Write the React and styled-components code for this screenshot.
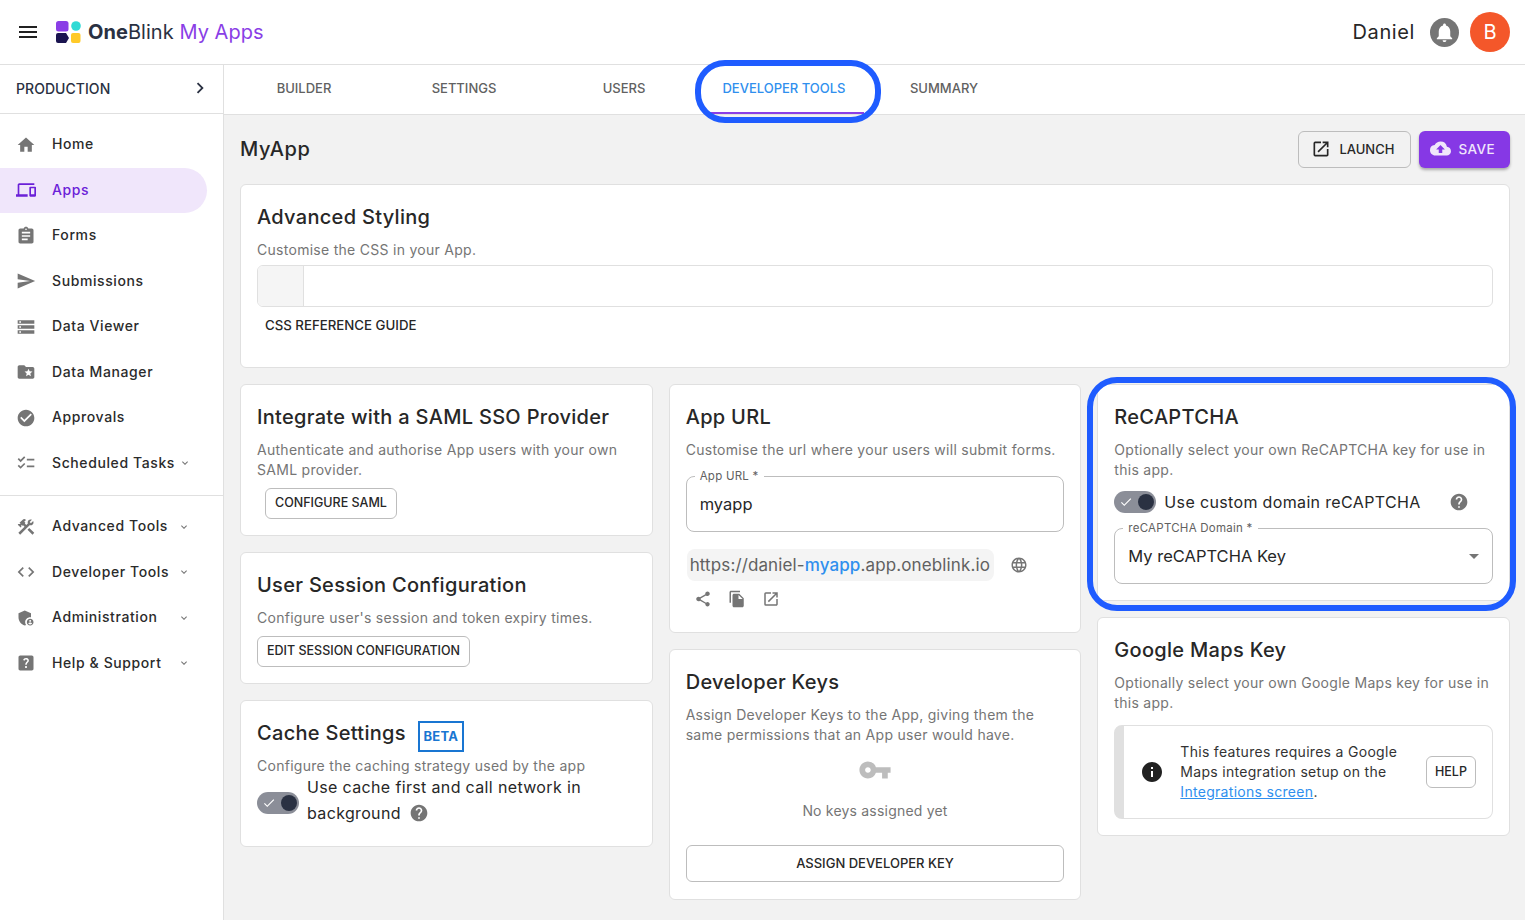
import React from "react";
import styled, { createGlobalStyle } from "styled-components";
import {
  MdMenu,
  MdChevronRight,
  MdNotifications,
  MdHome,
  MdDevices,
  MdAssignment,
  MdSend,
  MdStorage,
  MdFolderSpecial,
  MdCheckCircle,
  MdChecklist,
  MdConstruction,
  MdCode,
  MdAdminPanelSettings,
  MdHelpCenter,
  MdExpandMore,
  MdOpenInNew,
  MdCloudUpload,
  MdHelp,
  MdLanguage,
  MdShare,
  MdFileCopy,
  MdVpnKey,
  MdInfo,
  MdCheck,
  MdArrowDropDown,
} from "react-icons/md";

const GlobalStyle = createGlobalStyle`
  html, body {
    margin: 0;
    height: 100%;
    background: #fff;
    font-family: Inter, "Noto Sans", sans-serif;
    color: #272727;
  }
  * { box-sizing: border-box; }
`;

const Shell = styled.div`
  height: 100vh;
  display: flex;
  flex-direction: column;
  overflow: hidden;
`;

const AppBar = styled.header`
  height: 65px;
  flex: none;
  display: flex;
  align-items: center;
  padding: 0 15px 0 16px;
  background: #fff;
  border-bottom: 1px solid #e0e0e0;
`;

const MenuButton = styled.span`
  display: flex;
  color: #212121;
  font-size: 24px;
  margin-right: 16px;
`;

const Brand = styled.div`
  display: flex;
  align-items: center;
  gap: 7px;
  font-size: 20px;
  letter-spacing: 0.05px;
  color: #2a3142;
`;

const BrandStrong = styled.strong`
  font-weight: 700;
`;

const BrandAccent = styled.span`
  color: #8a3ee6;
`;

const Spacer = styled.div`
  flex: 1;
`;

const UserName = styled.span`
  font-size: 20px;
  letter-spacing: 0.6px;
  margin-right: 15px;
`;

const BellCircle = styled.span`
  width: 29px;
  height: 29px;
  border-radius: 50%;
  background: #757575;
  color: #fff;
  display: flex;
  align-items: center;
  justify-content: center;
  font-size: 23px;
  margin-right: 11px;
`;

const Avatar = styled.span`
  width: 40px;
  height: 40px;
  border-radius: 50%;
  background: #f4572a;
  color: #fff;
  display: flex;
  align-items: center;
  justify-content: center;
  font-size: 20px;
`;

const Body = styled.div`
  flex: 1;
  display: flex;
  min-height: 0;
`;

const Sidebar = styled.aside`
  width: 224px;
  flex: none;
  background: #fff;
  border-right: 1px solid #e0e0e0;
`;

const EnvRow = styled.div`
  height: 49px;
  display: flex;
  align-items: center;
  justify-content: space-between;
  padding: 0 12px 2px 16px;
  font-size: 14px;
  font-weight: 500;
  letter-spacing: 0.05px;
  color: #2a3142;
  border-bottom: 1px solid #e0e0e0;
  svg { font-size: 22px; }
`;

const NavGroup = styled.nav`
  padding: 8px 16px 9px 0;
  & + & { border-top: 1px solid #e0e0e0; }
`;

const NavItem = styled.div`
  height: 45.5px;
  display: flex;
  align-items: center;
  padding-left: 16px;
  font-size: 14px;
  font-weight: 500;
  letter-spacing: 0.6px;
  border-radius: 0 23px 23px 0;
  color: ${(p) => (p.$active ? "#6b21d8" : "#2b2b2b")};
  background: ${(p) => (p.$active ? "#f0e6fb" : "transparent")};
`;

const NavIcon = styled.span`
  width: 36px;
  display: flex;
  font-size: 20px;
  color: ${(p) => (p.$active ? "#6b21d8" : "#757575")};
`;

const NavLabel = styled.span`
  padding-bottom: 2px;
`;

const NavChevron = styled.span`
  display: flex;
  margin-left: 4px;
  font-size: 12px;
  color: #757575;
`;

const NavChevronEnd = styled(NavChevron)`
  margin-left: auto;
  margin-right: 17px;
`;

const Content = styled.div`
  flex: 1;
  min-width: 0;
  display: flex;
  flex-direction: column;
  background: #f2f2f2;
`;

const Tabs = styled.div`
  height: 50px;
  flex: none;
  display: flex;
  background: #fff;
  border-bottom: 1px solid #e0e0e0;
`;

const Tab = styled.div`
  position: relative;
  width: 160px;
  padding-bottom: 1px;
  display: flex;
  align-items: center;
  justify-content: center;
  font-size: 13px;
  font-weight: 500;
  color: ${(p) => (p.$active ? "#2f8fee" : "#616161")};
  border-bottom: 2px solid ${(p) => (p.$active ? "#8a3ee6" : "transparent")};
`;

const Highlight = styled.span`
  position: absolute;
  top: ${(p) => p.$top}px;
  right: ${(p) => p.$right}px;
  bottom: ${(p) => p.$bottom}px;
  left: ${(p) => p.$left}px;
  border: 6px solid #1f5cff;
  border-radius: ${(p) => p.$radius}px;
  pointer-events: none;
  z-index: 2;
`;

const Main = styled.main`
  flex: 1;
  padding: 16px 15px 16px 16px;
`;

const PageHead = styled.div`
  height: 37px;
  display: flex;
  align-items: center;
  gap: 8px;
  margin-bottom: 16px;
`;

const PageTitle = styled.h1`
  flex: 1;
  margin: 0;
  padding-bottom: 2px;
  font-size: 20px;
  font-weight: 500;
  letter-spacing: 0.6px;
`;

const OutlineButton = styled.button`
  display: inline-flex;
  align-items: center;
  justify-content: center;
  gap: 8px;
  height: ${(p) => p.$height || 31}px;
  width: ${(p) => p.$width || "auto"};
  padding: 0 9px 2px;
  background: transparent;
  border: 1px solid #bdbdbd;
  border-radius: 6px;
  font: 500 ${(p) => p.$size || 12.5}px Inter, sans-serif;
  color: #272727;
  svg { font-size: 20px; }
`;

const LaunchButton = styled(OutlineButton)`
  padding: 0 16px 2px 12px;
`;

const AssignButton = styled(OutlineButton)`
  margin: 18px 0 1px;
`;

const HelpButton = styled(OutlineButton)`
  padding: 0 8px 2px;
  width: 50px;
`;

const SaveButton = styled.button`
  display: inline-flex;
  align-items: center;
  gap: 7px;
  height: 37px;
  padding: 0 15px 2px 11px;
  background: #8638e5;
  color: #f0e6fb;
  border: none;
  border-radius: 6px;
  font: 500 13.5px Inter, sans-serif;
  letter-spacing: 0.4px;
  box-shadow: 0 2px 3px rgba(0, 0, 0, 0.3);
  svg { font-size: 21px; }
`;

const Card = styled.section`
  position: relative;
  background: #fff;
  border: 1px solid #e0e0e0;
  border-radius: 6px;
  padding: 16px;
`;

const WideCard = styled(Card)`
  height: 184px;
  margin-bottom: 16px;
`;

const Columns = styled.div`
  display: grid;
  grid-template-columns: repeat(3, 1fr);
  gap: 16px;
  align-items: start;
`;

const Column = styled.div`
  display: flex;
  flex-direction: column;
  gap: 16px;
`;

const CardTitle = styled.h2`
  margin: 0;
  font-size: 20px;
  line-height: 32px;
  font-weight: 500;
  letter-spacing: 0.3px;
  display: flex;
  align-items: center;
  gap: 8px;
`;

const CardText = styled.p`
  margin: 7px 0 0;
  font-size: 14px;
  line-height: 20px;
  letter-spacing: 0.28px;
  color: #757575;
`;

const EditorStub = styled.div`
  height: 42px;
  margin-top: 5px;
  display: flex;
  border: 1px solid #e0e0e0;
  border-radius: 6px;
  overflow: hidden;
`;

const EditorGutter = styled.div`
  width: 46px;
  background: #f5f5f5;
  border-right: 1px solid #e0e0e0;
`;

const TextAction = styled.div`
  margin: 10px 0 0 8px;
  font-size: 13.25px;
  line-height: 16px;
  font-weight: 500;
`;

const ActionRow = styled.div`
  margin-top: 8px;
  padding-left: ${(p) => p.$indent || 0}px;
`;

const BetaBadge = styled.span`
  width: 46px;
  height: 31px;
  margin: 3px 0 -3px 4px;
  border: 2px solid #1976d2;
  color: #1976d2;
  font-size: 13px;
  font-weight: 700;
  display: flex;
  align-items: center;
  justify-content: center;
`;

const SwitchRow = styled.div`
  display: flex;
  align-items: center;
  gap: 8px;
  margin-top: ${(p) => p.$top || 0}px;
  margin-bottom: ${(p) => p.$bottom || 0}px;
  font-size: 16px;
  line-height: 26px;
  letter-spacing: 0.35px;
  color: #272727;
`;

const HelpGlyph = styled(MdHelp)`
  font-size: 20px;
  color: #757575;
  vertical-align: -4px;
  margin-left: 3px;
  flex: none;
`;

const SwitchHelp = styled(HelpGlyph)`
  margin-left: 20px;
`;

const SwitchTrack = styled.span`
  position: relative;
  width: 42px;
  height: 22px;
  flex: none;
  margin-top: ${(p) => p.$drop || 0}px;
  border-radius: 11px;
  background: #8b8e98;
  color: #fff;
  display: flex;
  align-items: center;
  padding-left: 5px;
  font-size: 14px;
`;

const SwitchKnob = styled.span`
  position: absolute;
  right: 2px;
  top: 3px;
  width: 16px;
  height: 16px;
  border-radius: 50%;
  background: #2a3142;
`;

const Field = styled.div`
  position: relative;
  height: 56px;
  margin-top: ${(p) => p.$top}px;
  padding: 0 13px;
  display: flex;
  align-items: center;
  justify-content: space-between;
  border: 1px solid #bdbdbd;
  border-radius: 8px;
  font-size: 16.5px;
  color: #272727;
  svg { font-size: 24px; color: #757575; margin-right: -7px; }
`;

const FieldLabel = styled.span`
  position: absolute;
  left: 8px;
  top: -8px;
  padding: 0 5px;
  background: #fff;
  font-size: 11.5px;
  line-height: 14px;
  letter-spacing: 0.25px;
  color: #616161;
`;

const UrlRow = styled.div`
  display: flex;
  align-items: center;
  margin-top: 17px;
  gap: 16px;
`;

const UrlChip = styled.span`
  height: 32px;
  padding: 0 4px 0 3px;
  margin-left: 1px;
  display: flex;
  align-items: center;
  background: #f4f4f4;
  border-radius: 8px;
  font-size: 17px;
  letter-spacing: 0.12px;
  color: #616161;
  white-space: nowrap;
`;

const UrlAccent = styled.span`
  color: #2f8fee;
  font-weight: 500;
`;

const UrlIcon = styled(MdLanguage)`
  font-size: 18px;
  color: #757575;
`;

const IconRow = styled.div`
  display: flex;
  gap: 16px;
  margin: 9px 0 8px;
  padding-left: 8px;
  font-size: 18px;
  color: #757575;
  svg { display: block; }
`;

const EmptyState = styled.div`
  display: flex;
  flex-direction: column;
  align-items: center;
  margin-top: 8px;
  font-size: 14px;
  letter-spacing: 0.2px;
  color: #757575;
`;

const KeyIcon = styled(MdVpnKey)`
  font-size: 34px;
  color: #bdbdbd;
  margin-bottom: 15px;
`;

const Note = styled.div`
  margin-top: 12px;
  height: 94px;
  display: flex;
  align-items: center;
  border: 1px solid #e0e0e0;
  border-left: 10px solid #e0e0e0;
  border-radius: 8px;
  padding: 0 16px;
  font-size: 14px;
  line-height: 20px;
  letter-spacing: 0.3px;
  color: #333;
`;

const NoteIcon = styled(MdInfo)`
  font-size: 24px;
  color: #212121;
  flex: none;
  margin-right: 16px;
`;

const NoteText = styled.div`
  flex: 1;
`;

const NoteLink = styled.span`
  color: #2f8fee;
  text-decoration: underline;
`;

const Logo = () => (
  <svg width="25" height="24" viewBox="0 0 25 24">
    <rect x="0" y="1" width="12.5" height="10.5" rx="2.5" fill="#8a3ee6" />
    <circle cx="20" cy="6" r="4.8" fill="#2fdad5" />
    <path d="M2 13h8l3 5-3 5H2a2 2 0 0 1-2-2v-6a2 2 0 0 1 2-2z" fill="#1a1450" />
    <rect x="15" y="13" width="9.5" height="10" rx="2" fill="#ffca28" />
  </svg>
);

const mainNav = [
  { label: "Home", icon: MdHome },
  { label: "Apps", icon: MdDevices, active: true },
  { label: "Forms", icon: MdAssignment },
  { label: "Submissions", icon: MdSend },
  { label: "Data Viewer", icon: MdStorage },
  { label: "Data Manager", icon: MdFolderSpecial },
  { label: "Approvals", icon: MdCheckCircle },
  { label: "Scheduled Tasks", icon: MdChecklist, chevron: true },
];

const toolsNav = [
  { label: "Advanced Tools", icon: MdConstruction },
  { label: "Developer Tools", icon: MdCode },
  { label: "Administration", icon: MdAdminPanelSettings },
  { label: "Help & Support", icon: MdHelpCenter },
];

const tabs = ["BUILDER", "SETTINGS", "USERS", "DEVELOPER TOOLS", "SUMMARY"];

const App = () => (
  <Shell>
    <GlobalStyle />
    <AppBar>
      <MenuButton>
        <MdMenu />
      </MenuButton>
      <Brand>
        <Logo />
        <span>
          <BrandStrong>One</BrandStrong>Blink <BrandAccent>My Apps</BrandAccent>
        </span>
      </Brand>
      <Spacer />
      <UserName>Daniel</UserName>
      <BellCircle>
        <MdNotifications />
      </BellCircle>
      <Avatar>B</Avatar>
    </AppBar>
    <Body>
      <Sidebar>
        <EnvRow>
          PRODUCTION
          <MdChevronRight />
        </EnvRow>
        <NavGroup>
          {mainNav.map(({ label, icon: Icon, active, chevron }) => (
            <NavItem key={label} $active={active}>
              <NavIcon $active={active}>
                <Icon />
              </NavIcon>
              <NavLabel>{label}</NavLabel>
              {chevron && (
                <NavChevron>
                  <MdExpandMore />
                </NavChevron>
              )}
            </NavItem>
          ))}
        </NavGroup>
        <NavGroup>
          {toolsNav.map(({ label, icon: Icon }) => (
            <NavItem key={label}>
              <NavIcon>
                <Icon />
              </NavIcon>
              <NavLabel>{label}</NavLabel>
              <NavChevronEnd>
                <MdExpandMore />
              </NavChevronEnd>
            </NavItem>
          ))}
        </NavGroup>
      </Sidebar>
      <Content>
        <Tabs>
          {tabs.map((tab) => (
            <Tab key={tab} $active={tab === "DEVELOPER TOOLS"}>
              {tab}
              {tab === "DEVELOPER TOOLS" && (
                <Highlight $top={-5} $right={-17} $bottom={-11} $left={-9} $radius={30} />
              )}
            </Tab>
          ))}
        </Tabs>
        <Main>
          <PageHead>
            <PageTitle>MyApp</PageTitle>
            <LaunchButton $height={37} $size={13}>
              <MdOpenInNew />
              LAUNCH
            </LaunchButton>
            <SaveButton>
              <MdCloudUpload />
              SAVE
            </SaveButton>
          </PageHead>
          <WideCard>
            <CardTitle>Advanced Styling</CardTitle>
            <CardText>Customise the CSS in your App.</CardText>
            <EditorStub>
              <EditorGutter />
            </EditorStub>
            <TextAction>CSS REFERENCE GUIDE</TextAction>
          </WideCard>
          <Columns>
            <Column>
              <Card>
                <CardTitle>Integrate with a SAML SSO Provider</CardTitle>
                <CardText>
                  Authenticate and authorise App users with your own SAML provider.
                </CardText>
                <ActionRow $indent={8}>
                  <OutlineButton>CONFIGURE SAML</OutlineButton>
                </ActionRow>
              </Card>
              <Card>
                <CardTitle>User Session Configuration</CardTitle>
                <CardText>Configure user's session and token expiry times.</CardText>
                <ActionRow>
                  <OutlineButton>EDIT SESSION CONFIGURATION</OutlineButton>
                </ActionRow>
              </Card>
              <Card>
                <CardTitle>
                  Cache Settings <BetaBadge>BETA</BetaBadge>
                </CardTitle>
                <CardText>Configure the caching strategy used by the app</CardText>
                <SwitchRow $top={-2} $bottom={4}>
                  <SwitchTrack $drop={6}>
                    <MdCheck />
                    <SwitchKnob />
                  </SwitchTrack>
                  <span>
                    Use cache first and call network in background <HelpGlyph />
                  </span>
                </SwitchRow>
              </Card>
            </Column>
            <Column>
              <Card>
                <CardTitle>App URL</CardTitle>
                <CardText>Customise the url where your users will submit forms.</CardText>
                <Field $top={16}>
                  <FieldLabel>App URL *</FieldLabel>
                  myapp
                </Field>
                <UrlRow>
                  <UrlChip>
                    https://daniel-<UrlAccent>myapp</UrlAccent>.app.oneblink.io
                  </UrlChip>
                  <UrlIcon />
                </UrlRow>
                <IconRow>
                  <MdShare />
                  <MdFileCopy />
                  <MdOpenInNew />
                </IconRow>
              </Card>
              <Card>
                <CardTitle>Developer Keys</CardTitle>
                <CardText>
                  Assign Developer Keys to the App, giving them the same permissions that an App user
                  would have.
                </CardText>
                <EmptyState>
                  <KeyIcon />
                  No keys assigned yet
                </EmptyState>
                <ActionRow>
                  <AssignButton $height={37} $width="100%" $size={13}>
                    ASSIGN DEVELOPER KEY
                  </AssignButton>
                </ActionRow>
              </Card>
            </Column>
            <Column>
              <Card>
                <Highlight $top={-8} $right={-7} $bottom={-11} $left={-11} $radius={30} />
                <CardTitle>ReCAPTCHA</CardTitle>
                <CardText>Optionally select your own ReCAPTCHA key for use in this app.</CardText>
                <SwitchRow $top={9}>
                  <SwitchTrack>
                    <MdCheck />
                    <SwitchKnob />
                  </SwitchTrack>
                  Use custom domain reCAPTCHA
                  <SwitchHelp />
                </SwitchRow>
                <Field $top={13}>
                  <FieldLabel>reCAPTCHA Domain *</FieldLabel>
                  My reCAPTCHA Key
                  <MdArrowDropDown />
                </Field>
              </Card>
              <Card>
                <CardTitle>Google Maps Key</CardTitle>
                <CardText>Optionally select your own Google Maps key for use in this app.</CardText>
                <Note>
                  <NoteIcon />
                  <NoteText>
                    This features requires a Google Maps integration setup on the{" "}
                    <NoteLink>Integrations screen</NoteLink>.
                  </NoteText>
                  <HelpButton $height={32}>HELP</HelpButton>
                </Note>
              </Card>
            </Column>
          </Columns>
        </Main>
      </Content>
    </Body>
  </Shell>
);

export default App;
